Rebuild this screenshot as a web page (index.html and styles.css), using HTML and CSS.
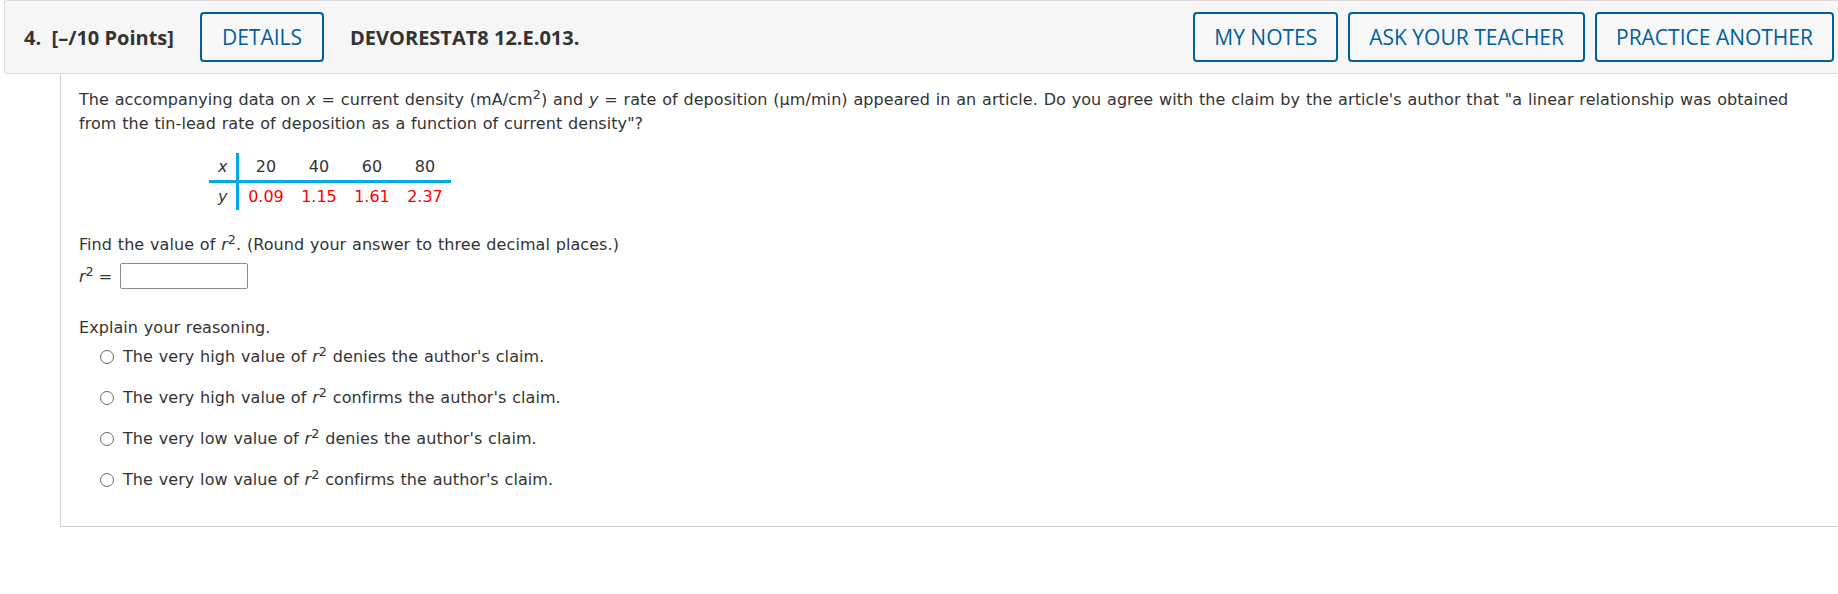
FILE: index.html
```html
<!DOCTYPE html>
<html>
<head>
<meta charset="utf-8">
<link rel="stylesheet" href="styles.css">
</head>
<body>
<div class="question">
  <div class="qhead">
    <div class="qleft">
      <span class="qnum">4.&nbsp; [–/10 Points]</span>
      <button class="btn">DETAILS</button>
      <span class="qcode">DEVORESTAT8 12.E.013.</span>
    </div>
    <div class="qright">
      <button class="btn">MY NOTES</button>
      <button class="btn">ASK YOUR TEACHER</button>
      <button class="btn">PRACTICE ANOTHER</button>
    </div>
  </div>
  <div class="qbody">
    <p class="para">The accompanying data on <i>x</i> = current density (mA/cm<sup>2</sup>) and <i>y</i> = rate of deposition (μm/min) appeared in an article. Do you agree with the claim by the article's author that "a linear relationship was obtained from the tin-lead rate of deposition as a function of current density"?</p>
    <table class="data">
      <tr class="r1"><td class="lab"><i>x</i></td><td>20</td><td>40</td><td>60</td><td>80</td></tr>
      <tr class="r2"><td class="lab"><i>y</i></td><td class="red">0.09</td><td class="red">1.15</td><td class="red">1.61</td><td class="red">2.37</td></tr>
    </table>
    <p class="find">Find the value of <i>r</i><sup>2</sup>. (Round your answer to three decimal places.)</p>
    <div class="answer"><span><i>r</i><sup>2</sup> =</span><span class="box"></span></div>
    <p class="explain">Explain your reasoning.</p>
    <ul class="opts">
      <li><span class="radio"></span><span class="opt">The very high value of <i>r</i><sup>2</sup> denies the author's claim.</span></li>
      <li><span class="radio"></span><span class="opt">The very high value of <i>r</i><sup>2</sup> confirms the author's claim.</span></li>
      <li><span class="radio"></span><span class="opt">The very low value of <i>r</i><sup>2</sup> denies the author's claim.</span></li>
      <li><span class="radio"></span><span class="opt">The very low value of <i>r</i><sup>2</sup> confirms the author's claim.</span></li>
    </ul>
  </div>
</div>
</body>
</html>
```
FILE: styles.css
```css
html, body {
  margin: 0;
  padding: 0;
  background: #fff;
  overflow: hidden;
}
body {
  font-family: "DejaVu Sans", Verdana, sans-serif;
  font-size: 16px;
  color: #333;
}
.question {
  margin-left: 4px;
  margin-right: -2px;
}
.qhead {
  display: flex;
  justify-content: space-between;
  align-items: center;
  height: 72px;
  background: #f6f6f6;
  border: 1px solid #dcdcdc;
  border-radius: 3px;
  font-family: "Open Sans", sans-serif;
}
.qleft, .qright {
  display: flex;
  align-items: center;
}
.qleft {
  padding-left: 19px;
}
.qright {
  gap: 10px;
  padding-right: 5px;
}
.qnum, .qcode {
  font-weight: 700;
  font-size: 20px;
  color: #333;
}
.qnum { margin-right: 26px; }
.qcode { margin-left: 26px; }
.btn {
  font-family: "Open Sans", sans-serif;
  font-size: 21px;
  color: #00609e;
  background: #f8f8f8;
  border: 2px solid #00609e;
  border-radius: 4px;
  height: 50px;
  padding: 0 19px;
  margin: 0;
}
.qleft .btn { padding: 0 20px; }
.qbody {
  margin-left: 56px;
  border-left: 1px solid #cfcfcf;
  border-right: 1px solid #cfcfcf;
  border-bottom: 1px solid #cfcfcf;
  padding: 14px 18px 34px 18px;
}
p { margin: 0; }
.para {
  line-height: 24px;
  word-spacing: 0.6px;
  letter-spacing: 0.07px;
}
.find, .explain, .opt {
  word-spacing: 0.6px;
  letter-spacing: 0.07px;
}
sup {
  font-size: 0.8em;
  line-height: 0;
  vertical-align: 0.45em;
}
.data {
  border-collapse: collapse;
  margin: 17px 0 0 130px;
}
.data td {
  height: 27px;
  padding: 0 8px;
  text-align: center;
  width: 37px;
}
.data td.lab {
  width: auto;
  border-right: 3px solid #00a8e8;
  padding: 0 9px 0 9px;
}
.data .r1 td { border-bottom: 3px solid #00a8e8; }
.red { color: #f00; }
.find { margin-top: 23px; line-height: 24px; }
.answer {
  display: flex;
  align-items: center;
  gap: 8px;
  margin-top: 6px;
  height: 26px;
}
.box {
  width: 126px;
  height: 24px;
  border: 1px solid #8a8a8a;
  border-radius: 2px;
  background: #fff;
}
.explain { margin-top: 27px; line-height: 24px; }
.opts {
  list-style: none;
  margin: 5px 0 0 0;
  padding: 0 0 0 22px;
  display: flex;
  flex-direction: column;
  gap: 17px;
}
.opts li {
  display: flex;
  align-items: center;
  line-height: 24px;
}
.radio {
  width: 12px;
  height: 12px;
  border: 1.5px solid #6b6b6b;
  border-radius: 50%;
  margin-right: 9px;
  margin-left: -1px;
  flex: none;
}
```
